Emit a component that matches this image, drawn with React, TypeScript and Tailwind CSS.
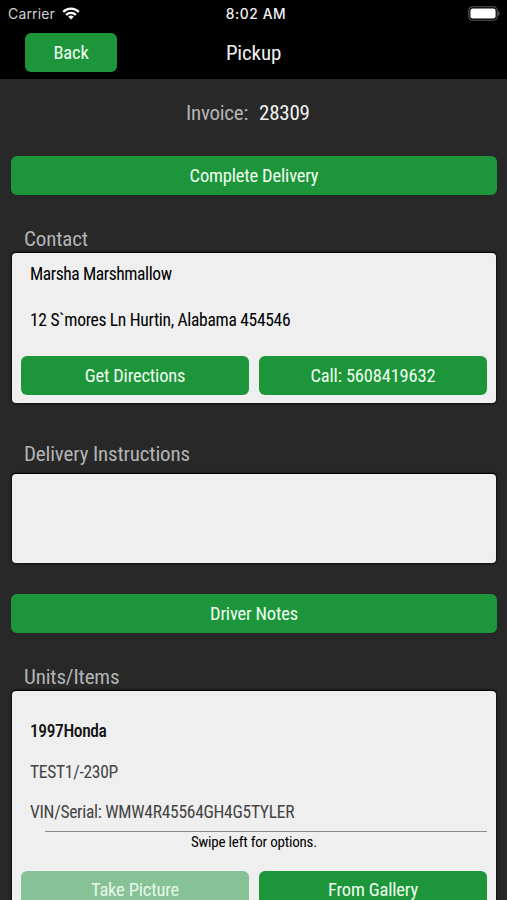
import React from 'react';
import clsx from 'clsx';

interface ButtonProps {
  label: string;
  className?: string;
  disabled?: boolean;
}

const GreenButton = ({ label, className = 'pt-px', disabled }: ButtonProps) => (
  <button
    disabled={disabled}
    className={clsx(
      'flex h-[39px] items-center justify-center rounded-[6px] text-[18.5px] tracking-[-0.18px]',
      disabled ? 'bg-[#87c297] text-[#e6f8e8]' : 'bg-[#1c953b] text-[#f0fff0]',
      className
    )}
  >
    {label}
  </button>
);

const SectionLabel = ({ children }: { children: React.ReactNode }) => (
  <h2 className="ml-6 h-[28px] text-[21px] leading-[28px] tracking-[-0.15px] text-[#b4b4b4]">{children}</h2>
);

const StatusBar = () => (
  <div className="flex h-[27px] items-center justify-between pl-[8px] pr-[7px] font-['Inter'] font-stretch-normal">
    <div className="flex w-[180px] items-center gap-[7px]">
      <span className="text-[14px] tracking-[0.15px] text-[#d2d2d2]">Carrier</span>
      <svg width="18" height="13" viewBox="0 0 18 13" fill="none" stroke="#fff" strokeWidth="2.3">
        <path d="M1.2 4.9a11 11 0 0 1 15.6 0" />
        <path d="M4.1 7.9a6.9 6.9 0 0 1 9.8 0" />
        <path d="M9 12.6 6.2 9.8a4 4 0 0 1 5.6 0z" fill="#fff" stroke="none" />
      </svg>
    </div>
    <span className="pl-[4px] pt-px text-[13.8px] font-medium tracking-[0.6px] text-[#f0f0f0]">8:02 AM</span>
    <div className="flex w-[180px] justify-end">
      <svg width="32" height="15" viewBox="0 0 32 15">
        <rect x="0.75" y="0.75" width="28.5" height="13.5" rx="4" fill="none" stroke="#555" strokeWidth="1.2" />
        <rect x="2.4" y="2.4" width="25.2" height="10.2" rx="2.4" fill="#fff" />
        <path d="M30.4 5.2c1.6.7 1.6 3.9 0 4.6z" fill="#777" />
      </svg>
    </div>
  </div>
);

const App = () => {
  return (
    <div className="flex h-[900px] w-[507px] flex-col overflow-hidden bg-[#282828] font-['Roboto_Condensed','Roboto',sans-serif] font-stretch-condensed">
      {/* Header */}
      <header className="h-[79px] shrink-0 bg-black">
        <StatusBar />
        <div className="grid grid-cols-[1fr_auto_1fr] items-center pt-[6px]">
          <GreenButton label="Back" className="ml-[25px] w-[92px] pt-[2px]" />
          <h1 className="text-[21px] leading-[28px] tracking-[-0.15px] text-[#f0f0f0]">Pickup</h1>
        </div>
      </header>

      <main className="flex flex-col">
        <div className="mt-5 flex h-7 gap-[11px] pl-[186px] text-[21px] leading-[28px] tracking-[-0.25px]">
          <span className="text-[#b4b4b4]">Invoice:</span>
          <span className="text-[#f0f0f0]">28309</span>
        </div>
        <GreenButton label="Complete Delivery" className="ml-[11px] mr-[10px] mt-[29px] pt-[2px]" />

        {/* Contact */}
        <section className="mt-[30px]">
          <SectionLabel>Contact</SectionLabel>
          <div className="ml-3 mr-[11px] h-[150px] rounded-[4px] bg-[#efefef] px-[9px] pt-[9px] text-[17.5px] leading-[24px] text-black shadow-[0_-1px_1px_#000,0_0_2px_1px_#111]">
            <p className="ml-[9px] tracking-[-0.4px]">Marsha Marshmallow</p>
            <p className="ml-[9px] mt-[22px] tracking-[-0.3px]">12 S`mores Ln Hurtin, Alabama 454546</p>
            <div className="mt-[24px] grid grid-cols-2 gap-[10px]">
              <GreenButton label="Get Directions" />
              <GreenButton label="Call: 5608419632" />
            </div>
          </div>
        </section>

        {/* Delivery instructions */}
        <section className="mt-[37px]">
          <SectionLabel>Delivery Instructions</SectionLabel>
          <div className="ml-3 mr-[11px] mt-[6px] h-[89px] rounded-[4px] bg-[#efefef] shadow-[0_-1px_1px_#000,0_0_2px_1px_#111]" />
        </section>

        <GreenButton label="Driver Notes" className="ml-[11px] mr-[10px] mt-[31px] pt-[2px]" />

        {/* Units */}
        <section className="mt-[30px]">
          <SectionLabel>Units/Items</SectionLabel>
          <div className="ml-3 mr-[11px] h-[240px] rounded-[4px] bg-[#efefef] px-[9px] pt-[28px] text-[17.5px] leading-[24px] tracking-[-0.28px] text-[#444] shadow-[0_-1px_1px_#000,0_0_2px_1px_#111]">
            <p className="ml-[9px] font-medium tracking-[-0.4px] text-[#111]">1997Honda</p>
            <p className="ml-[9px] mt-[17px]">TEST1/-230P</p>
            <p className="ml-[9px] mt-[16px]">VIN/Serial: WMW4R45564GH4G5TYLER</p>
            <hr className="ml-6 mt-[7px] border-[#8c8c8c]" />
            <p className="text-center text-[15px] leading-[20px] tracking-[-0.2px] text-black">Swipe left for options.</p>
            <div className="mt-[19px] grid grid-cols-2 gap-[10px]">
              <GreenButton label="Take Picture" disabled className="pb-px" />
              <GreenButton label="From Gallery" className="pb-px" />
            </div>
          </div>
        </section>
      </main>
    </div>
  );
};

export default App;
